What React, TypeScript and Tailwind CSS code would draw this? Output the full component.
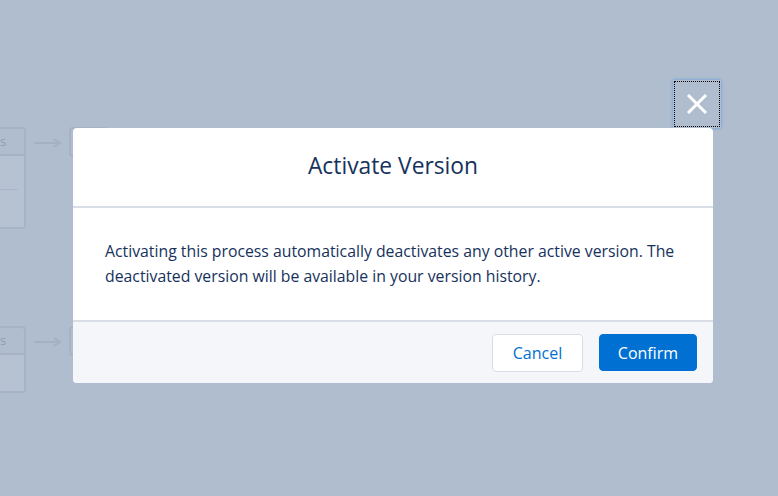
function FlowGroup({ tall }: { tall: boolean }) {
  return (
    <div className="flex items-start">
      {/* left step box, cut off by the window edge */}
      <div
        className={`-ml-[44px] flex w-[70px] flex-col overflow-hidden rounded-[4px] border-2 border-[#a6b3c5] ${
          tall ? "h-[102px]" : "h-[67px]"
        }`}
      >
        <div className="flex h-[27px] shrink-0 items-center border-b-2 border-[#a6b3c5] pl-[42px] text-[13px] leading-none text-[#8d9db3]">
          s
        </div>
        <div className="flex-1 bg-[#b6c2d1]">
          {tall && <div className="mt-[33px] h-px w-[60px] bg-[#a9b6c7]" />}
        </div>
      </div>
      <svg width="28" height="12" viewBox="0 0 28 12" className="ml-[8px] mt-[10px]">
        <line x1="0" y1="6" x2="24" y2="6" stroke="#a3b1c4" strokeWidth="2" />
        <path d="M20 2 L26 6 L20 10" fill="none" stroke="#a3b1c4" strokeWidth="2" />
      </svg>
      <div className="ml-[7px] h-[30px] w-[40px] rounded-[4px] border-2 border-[#a6b3c5]" />
    </div>
  );
}

export default function App() {
  return (
    <div
      className="relative h-[496px] w-[778px] overflow-hidden bg-[#b0bdce]"
      style={{ fontFamily: '"Open Sans", "Liberation Sans", sans-serif' }}
    >
      {/* dimmed canvas behind the modal */}
      <div className="flex flex-col gap-[97px] pt-[127px]">
        <FlowGroup tall />
        <FlowGroup tall={false} />
      </div>

      {/* close button */}
      <button className="absolute left-[673px] top-[80px] flex h-[48px] w-[48px] items-center justify-center outline-dotted outline-1 outline-offset-[-2px] outline-black shadow-[0_0_3px_#5b9ae0]">
        <svg width="22" height="22" viewBox="0 0 22 22">
          <path d="M2 2 L20 20 M20 2 L2 20" stroke="white" strokeWidth="3" strokeLinecap="butt" />
        </svg>
      </button>

      {/* modal */}
      <div className="absolute left-[73px] top-[128px] w-[640px] overflow-hidden rounded-[4px] bg-white">
        <div className="flex h-[80px] items-center justify-center border-b-2 border-[#d8dde6] pb-[2px]">
          <h2 className="text-[22.8px] font-normal text-[#16325c]">Activate Version</h2>
        </div>
        <div className="whitespace-nowrap px-[32px] pb-[31px] pt-[31px] text-[15.8px] leading-[25px] text-[#16325c]">
          Activating this process automatically deactivates any other active version. The
          <br />
          deactivated version will be available in your version history.
        </div>
        <div className="flex h-[63px] items-center justify-end gap-[16px] border-t-2 border-[#d8dde6] bg-[#f4f6f9] px-[16px]">
          <button className="h-[38px] w-[91px] rounded-[4px] border border-[#d8dde6] bg-white text-[16px] text-[#0070d2]">
            Cancel
          </button>
          <button className="h-[37px] w-[98px] rounded-[4px] border border-[#0070d2] bg-[#0070d2] text-[16px] text-white">
            Confirm
          </button>
        </div>
      </div>
    </div>
  );
}
